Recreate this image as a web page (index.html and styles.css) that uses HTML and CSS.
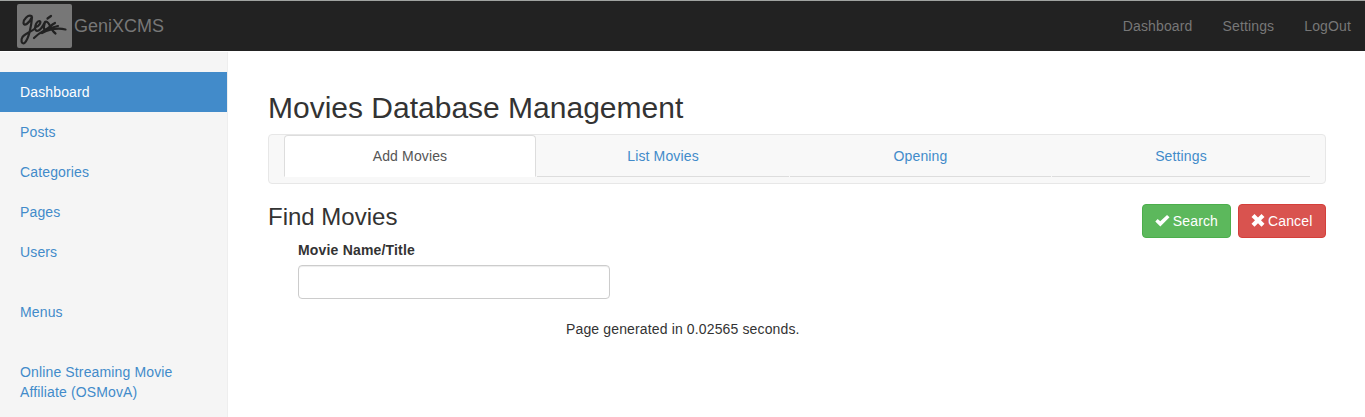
FILE: index.html
```html
<!DOCTYPE html>
<html lang="en">
<head>
<meta charset="utf-8">
<title>GeniXCMS</title>
<link rel="stylesheet" href="styles.css">
</head>
<body>
<header class="navbar">
  <a class="brand">
    <svg class="logo" width="55" height="44" viewBox="0 0 55 44">
      <rect width="55" height="44" rx="2" fill="#777"/>
      <g fill="none" stroke="#222" stroke-width="2.200" stroke-linecap="round" stroke-linejoin="round">
        <path d="M14.500 12C11 10.500 6.500 15 6.500 19C7 23 12.500 19 15 13C14.500 21 12 35 7.500 39C4.500 40.500 3.500 36 5.500 33C8 29.500 14 28 18 24.500"/>
        <path d="M18 23.500C22 22.500 25 17.500 22.500 17C18.500 17.500 16.500 26 20 27C23 27 26 22 28 18C27 22 26 25.500 28 25.500C31 25.500 33 21.500 38 19"/>
        <path d="M29 17.500C33.500 18.500 33 26 38.500 29.500"/>
        <path d="M30.500 14.500L34 12"/>
        <path d="M17 34C22 29 31 24 41 22"/>
        <path d="M25 29C32 25.500 40 23.500 48.500 25.500"/>
      </g>
    </svg>
    <span>GeniXCMS</span>
  </a>
  <nav class="top-links"><a>Dashboard</a><a>Settings</a><a>LogOut</a></nav>
</header>
<div class="layout">
  <aside class="sidebar">
    <ul class="side-nav">
      <li class="active">Dashboard</li>
      <li>Posts</li>
      <li>Categories</li>
      <li>Pages</li>
      <li>Users</li>
    </ul>
    <ul class="side-nav"><li>Menus</li></ul>
    <ul class="side-nav"><li>Online Streaming Movie Affiliate (OSMovA)</li></ul>
  </aside>
  <main class="main">
    <h1>Movies Database Management</h1>
    <nav class="tabs">
      <a class="tab active">Add Movies</a>
      <a class="tab">List Movies</a>
      <a class="tab">Opening</a>
      <a class="tab">Settings</a>
    </nav>
    <div class="heading-row">
      <h2>Find Movies</h2>
      <div class="actions">
        <button class="btn success"><svg width="15" height="14" viewBox="0 0 15 14"><path d="M0.300 7.500L2.700 5L5.300 7.300L12.200 0.800L14.700 3.200L5.400 12.700Z" fill="#fff"/></svg>Search</button>
        <button class="btn danger"><svg width="14" height="14" viewBox="0 0 14 14"><path d="M3.500 0L7 3.500L10.500 0L13.500 3L10 6.300L13.500 9.700L10.500 12.700L7 9.200L3.500 12.700L0.500 9.700L4 6.300L0.500 3Z" fill="#fff"/></svg>Cancel</button>
      </div>
    </div>
    <div class="field">
      <label for="movie">Movie Name/Title</label>
      <input id="movie" type="text">
    </div>
    <footer class="generated">Page generated in 0.02565 seconds.</footer>
  </main>
</div>
</body>
</html>
```
FILE: styles.css
```css
* { box-sizing: border-box; }
body {
  margin: 0;
  height: 417px;
  overflow: hidden;
  background: #fff;
  color: #333;
  font: 14px/20px "Liberation Sans", Arial, sans-serif;
  letter-spacing: .14px;
}
.navbar {
  display: flex;
  justify-content: space-between;
  height: 51px;
  border-top: 1px solid #a0a3a1;
  background: #222;
  color: #777;
}
.brand {
  display: flex;
  gap: 2px;
  padding: 3px 0 0 17px;
  font-size: 18px;
  letter-spacing: 0;
}
.brand span { padding-top: 12px; }
.logo { display: block; }
.top-links {
  display: flex;
  gap: 30px;
  padding: 15px 14px 0 0;
}
.layout {
  display: flex;
  height: 366px;
  padding-top: 1px;
}
.sidebar {
  flex: none;
  width: 228px;
  padding-top: 20px;
  border-right: 1px solid #eee;
  background: #f5f5f5;
}
.side-nav {
  margin: 0 0 20px;
  padding: 0;
  list-style: none;
  color: #428bca;
}
.side-nav li { padding: 10px 20px; }
.side-nav .active { background: #428bca; color: #fff; }
.main {
  flex: 1;
  padding: 39px 39px 0 40px;
}
h1, h2 { margin: 0; font-weight: 500; letter-spacing: 0; }
h1 { font-size: 30px; line-height: 33px; }
h2 { font-size: 24px; line-height: 26px; }
.tabs {
  display: grid;
  grid-template-columns: 253px 253px 262px 258px;
  height: 50px;
  margin-top: 10px;
  padding: 0 15px;
  border: 1px solid #e7e7e7;
  border-radius: 4px;
  background: #f8f8f8;
}
.tab {
  height: 42px;
  margin-right: 1px;
  padding-top: 11px;
  border-bottom: 1px solid #ddd;
  border-radius: 4px 4px 0 0;
  color: #428bca;
  text-align: center;
}
.tab:last-child { margin-right: 0; }
.tab.active {
  padding-top: 10px;
  border: 1px solid #ddd;
  border-bottom-color: #fff;
  background: #fff;
  color: #555;
}
.heading-row {
  display: flex;
  justify-content: space-between;
  height: 36px;
  padding-top: 20px;
}
.actions { display: flex; gap: 7px; }
.btn {
  display: flex;
  align-items: center;
  gap: 3px;
  height: 34px;
  padding: 0 12px;
  border: 1px solid;
  border-radius: 4px;
  color: #fff;
  font: inherit;
  letter-spacing: inherit;
}
.success { width: 89px; background: #5cb85c; border-color: #4cae4c; }
.danger { width: 88px; background: #d9534f; border-color: #d43f3a; }
.field { padding: 20px 0 0 30px; }
.field label {
  display: block;
  margin-bottom: 5px;
  font-weight: 700;
  letter-spacing: .18px;
}
.field input {
  display: block;
  width: 312px;
  height: 34px;
  padding: 6px 12px;
  border: 1px solid #ccc;
  border-radius: 4px;
  background: #fff;
  box-shadow: inset 0 1px 1px rgba(0, 0, 0, .075);
}
.generated {
  padding-top: 20px;
  margin-left: 298px;
}
```
